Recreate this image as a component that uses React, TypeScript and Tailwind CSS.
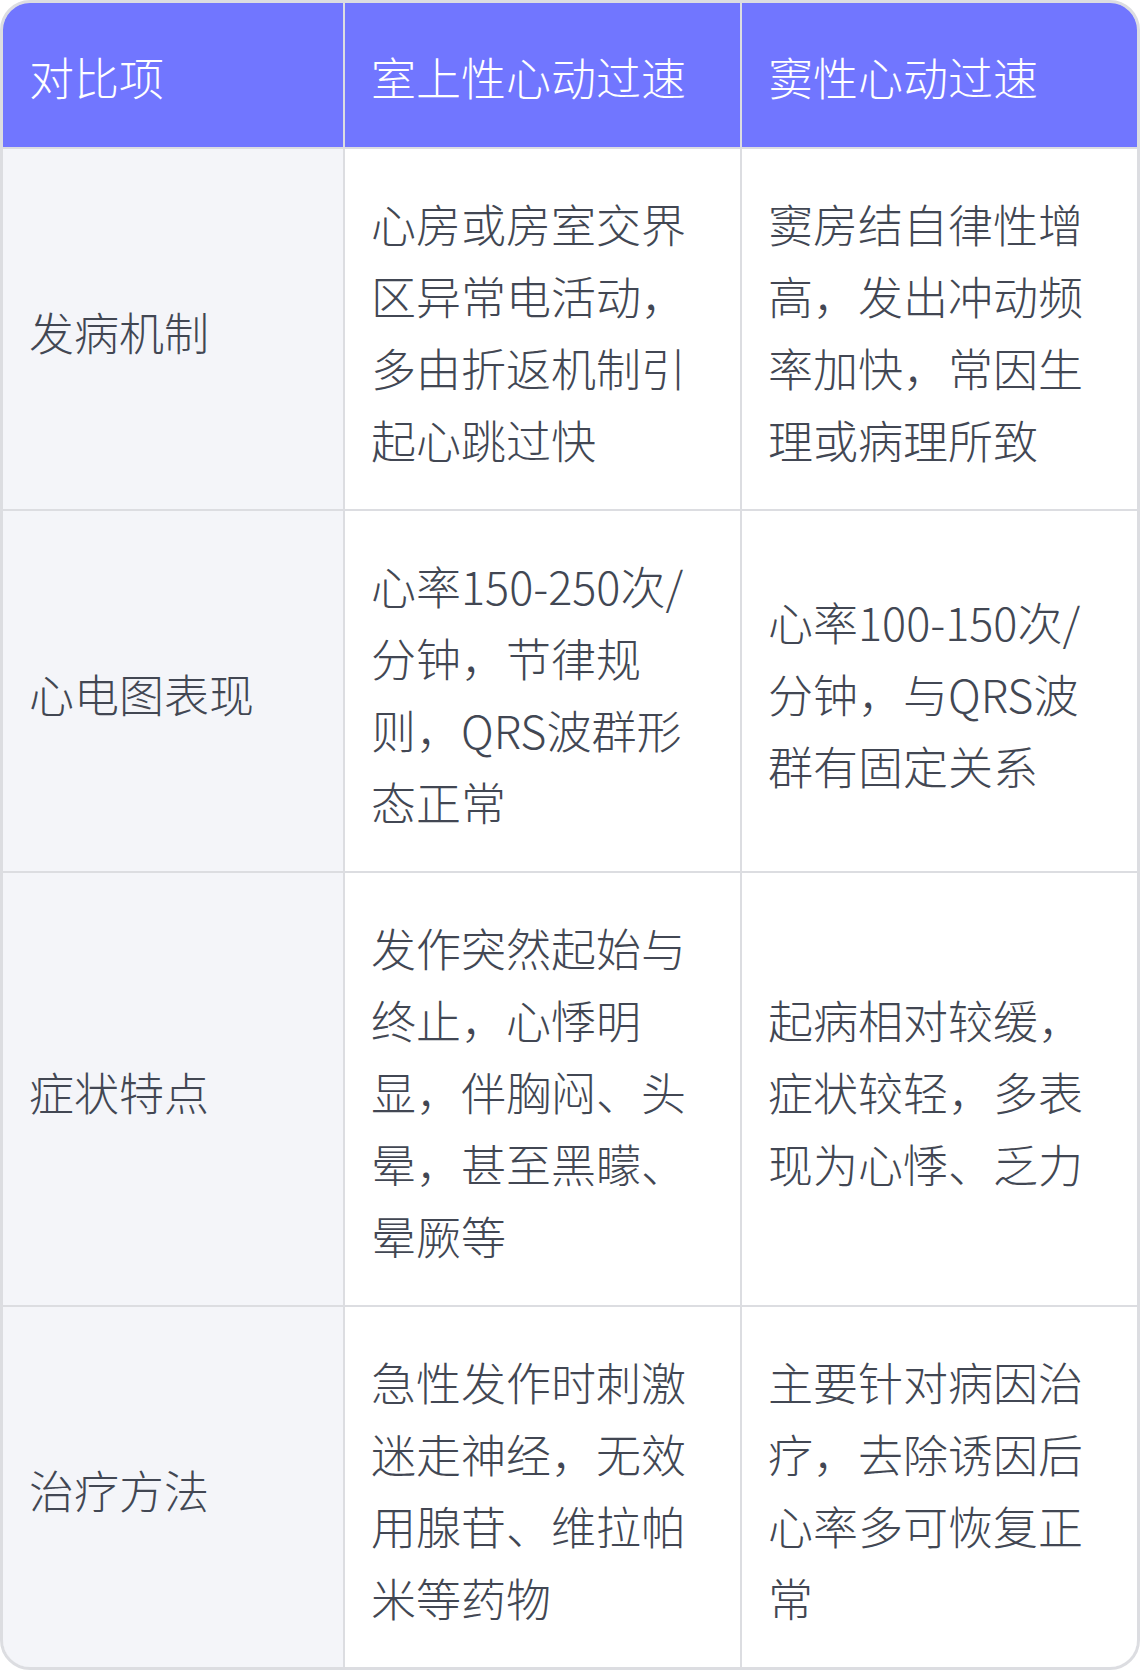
import React from 'react';

interface Row {
  label: string;
  svt: string;
  sinus: string;
}

const rows: Row[] = [
  {
    label: '发病机制',
    svt: '心房或房室交界区异常电活动，多由折返机制引起心跳过快',
    sinus: '窦房结自律性增高，发出冲动频率加快，常因生理或病理所致'
  },
  {
    label: '心电图表现',
    svt: '心率150-250次/分钟，节律规则，QRS波群形态正常',
    sinus: '心率100-150次/分钟，与QRS波群有固定关系'
  },
  {
    label: '症状特点',
    svt: '发作突然起始与终止，心悸明显，伴胸闷、头晕，甚至黑矇、晕厥等',
    sinus: '起病相对较缓，症状较轻，多表现为心悸、乏力'
  },
  {
    label: '治疗方法',
    svt: '急性发作时刺激迷走神经，无效用腺苷、维拉帕米等药物',
    sinus: '主要针对病因治疗，去除诱因后心率多可恢复正常'
  }
];

const headers = ['对比项', '室上性心动过速', '窦性心动过速'];

const App: React.FC = () => {
  return (
    <div className="w-[1140px] bg-white font-['Noto_Sans_CJK_SC',sans-serif] font-light">
      <div className="rounded-[30px] border-[3px] border-[#dcdde1] overflow-hidden">
        <div className="grid grid-cols-[340px_395px_395px] gap-[2px] bg-[#dcdde1]">
          {headers.map((h) => (
            <div
              key={h}
              className="h-[144px] flex items-center pl-[26px] pr-7 pt-1 bg-[#7176ff] text-white text-[45px] leading-[72px]"
            >
              {h}
            </div>
          ))}

          {rows.map((row) => (
            <React.Fragment key={row.label}>
              <div className="flex items-center pl-[26px] pr-7 pt-[39px] pb-[33px] bg-[#f4f5f9] text-[#424753] text-[45px] leading-[72px]">
                {row.label}
              </div>
              <div className="flex items-center pl-[26px] pr-7 pt-[39px] pb-[33px] bg-white text-[#424753] text-[45px] leading-[72px]">
                <p>{row.svt}</p>
              </div>
              <div className="flex items-center pl-[26px] pr-7 pt-[39px] pb-[33px] bg-white text-[#424753] text-[45px] leading-[72px]">
                <p>{row.sinus}</p>
              </div>
            </React.Fragment>
          ))}
        </div>
      </div>
    </div>
  );
};

export default App;
